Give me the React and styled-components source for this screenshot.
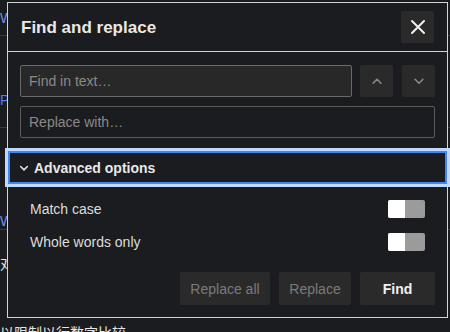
import styled, { createGlobalStyle } from "styled-components";

const Global = createGlobalStyle`
  html, body {
    margin: 0;
    padding: 0;
    background: #1b1c1f;
    overflow: hidden;
  }
  body {
    font-family: "Liberation Sans", Arial, sans-serif;
  }
`;

const Page = styled.div`
  position: relative;
  width: 450px;
  height: 332px;
  background: #1b1c1f;
  overflow: hidden;
`;

const Doc = styled.div`
  display: flex;
  flex-direction: column;
`;

const DocRow = styled.div`
  height: ${(p) => p.h}px;
  box-sizing: border-box;
  padding-top: ${(p) => p.pt || 0}px;
  border-bottom: ${(p) => (p.line ? "1px solid #3a3b3f" : "none")};
  display: flex;
  align-items: ${(p) => p.align || "center"};
  font-size: 14px;
  color: ${(p) => p.color || "#e6e6e6"};
  white-space: nowrap;
  font-family: "Liberation Sans", "Noto Sans CJK SC", sans-serif;
`;

const Dialog = styled.div`
  position: absolute;
  left: 7px;
  top: 2px;
  width: 439px;
  height: 314px;
  background: #1b1c1f;
  border: 1px solid #d4d4d4;
  display: flex;
  flex-direction: column;
`;

const Header = styled.div`
  height: 48px;
  border-bottom: 1px solid #d4d4d4;
  display: flex;
  align-items: center;
  justify-content: space-between;
  padding: 0 13px 0 13px;
`;

const Title = styled.h2`
  margin: 2px 0 0 0;
  font-size: 17px;
  font-weight: 700;
  color: #e8e8e8;
`;

const IconButton = styled.button`
  width: 33px;
  height: 32px;
  border: none;
  border-radius: 2px;
  background: #2a2a2b;
  display: flex;
  align-items: center;
  justify-content: center;
  padding: 0;
  color: ${(p) => (p.muted ? "#8a8a8a" : "#f0f0f0")};
`;

const Body = styled.div`
  padding: 13px 12px 0 12px;
  display: flex;
  flex-direction: column;
  gap: 9px;
`;

const FieldRow = styled.div`
  display: flex;
  gap: 8px;
`;

const NavGroup = styled.div`
  display: flex;
  gap: 9px;
`;

const Field = styled.input`
  flex: 1;
  height: 32px;
  box-sizing: border-box;
  margin: 0;
  padding: 0 8px;
  border: 1px solid ${(p) => (p.filled ? "#6a6a6a" : "#5c5c5c")};
  border-radius: 2px;
  background: ${(p) => (p.filled ? "#282828" : "#1b1c1f")};
  font-family: "Liberation Sans", Arial, sans-serif;
  font-size: 14px;
  color: #e8e8e8;
  outline: none;
  &::placeholder {
    color: #8a8a8a;
  }
`;

const Section = styled.button`
  margin-top: 13px;
  height: 33px;
  box-sizing: border-box;
  width: 100%;
  border: 2px solid #3f86f6;
  outline: 3px solid #c2d9ff;
  background: #1b1c1f;
  display: flex;
  align-items: center;
  gap: 4px;
  padding: 0 0 0 8px;
  font-family: "Liberation Sans", Arial, sans-serif;
  font-size: 14px;
  font-weight: 700;
  color: #e8e8e8;
`;

const Options = styled.div`
  padding: 8px 22px 0 22px;
  display: flex;
  flex-direction: column;
`;

const OptionRow = styled.label`
  height: 33px;
  display: flex;
  align-items: center;
  justify-content: space-between;
  font-size: 14px;
  color: #dcdcdc;
`;

const Toggle = styled.span`
  width: 37px;
  height: 18px;
  border-radius: 2px;
  background: #9b9b9b;
  display: flex;
  overflow: hidden;
`;

const Knob = styled.span`
  width: 17px;
  height: 18px;
  background: #ffffff;
`;

const Actions = styled.div`
  margin-top: auto;
  padding: 0 12px 12px 12px;
  display: flex;
  justify-content: flex-end;
  gap: 9px;
`;

const ActionButton = styled.button`
  height: 33px;
  width: ${(p) => p.w}px;
  border: none;
  border-radius: 2px;
  background: #2a2a2b;
  font-family: "Liberation Sans", Arial, sans-serif;
  font-size: 14px;
  font-weight: ${(p) => (p.primary ? 700 : 400)};
  color: ${(p) => (p.primary ? "#f0f0f0" : "#7a7a7a")};
  padding: 0;
`;

function Chevron({ up, size = 14, width = 2 }) {
  return (
    <svg width={size} height={size} viewBox="0 0 16 16" fill="none">
      <path
        d={up ? "M3.5 10.5 L8 6 L12.5 10.5" : "M3.5 6 L8 10.5 L12.5 6"}
        stroke="currentColor"
        strokeWidth={width}
        strokeLinecap="round"
        strokeLinejoin="round"
      />
    </svg>
  );
}

function Close() {
  return (
    <svg width="16" height="16" viewBox="0 0 16 16" fill="none">
      <path
        d="M2 2 L14 14 M14 2 L2 14"
        stroke="currentColor"
        strokeWidth="2"
        strokeLinecap="round"
      />
    </svg>
  );
}

export default function App() {
  return (
    <>
      <Global />
      <Page>
        <Doc>
          <DocRow h={36} line color="#6f8ee6">Wo</DocRow>
          <DocRow h={92} line align="flex-start" pt={56} color="#4a7dff">
            P
          </DocRow>
          <DocRow h={102} line align="flex-end" color="#6f8ee6">
            Wo
          </DocRow>
          <DocRow h={66}>对</DocRow>
          <DocRow h={46} align="flex-end">以限制以行数字比较</DocRow>
        </Doc>

        <Dialog role="dialog">
          <Header>
            <Title>Find and replace</Title>
            <IconButton aria-label="Close">
              <Close />
            </IconButton>
          </Header>

          <Body>
            <FieldRow>
              <Field filled placeholder="Find in text…" />
              <NavGroup>
                <IconButton muted aria-label="Previous">
                  <Chevron up width={1.8} />
                </IconButton>
                <IconButton muted aria-label="Next">
                  <Chevron width={1.8} />
                </IconButton>
              </NavGroup>
            </FieldRow>
            <FieldRow>
              <Field placeholder="Replace with…" />
            </FieldRow>
          </Body>

          <Section>
            <Chevron size={12} />
            Advanced options
          </Section>

          <Options>
            <OptionRow>
              Match case
              <Toggle>
                <Knob />
              </Toggle>
            </OptionRow>
            <OptionRow>
              Whole words only
              <Toggle>
                <Knob />
              </Toggle>
            </OptionRow>
          </Options>

          <Actions>
            <ActionButton w={90}>Replace all</ActionButton>
            <ActionButton w={72}>Replace</ActionButton>
            <ActionButton w={75} primary>
              Find
            </ActionButton>
          </Actions>
        </Dialog>
      </Page>
    </>
  );
}
